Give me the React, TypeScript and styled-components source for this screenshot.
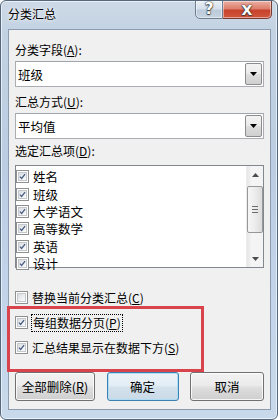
import React from "react";
import styled, { createGlobalStyle } from "styled-components";

const GlobalStyle = createGlobalStyle`
  html, body {
    margin: 0;
    padding: 0;
    background: #ffffff;
  }
  body {
    font-family: "Noto Sans CJK SC", "Noto Sans", "Liberation Sans", sans-serif;
    font-size: 12px;
    color: #000;
  }
`;

const Window = styled.div`
  position: relative;
  box-sizing: border-box;
  width: 278px;
  height: 420px;
  border: 1px solid #55687c;
  border-radius: 6px;
  background: linear-gradient(
    180deg,
    #cdd9e6 0%,
    #c2d2e3 8%,
    #bacde2 40%,
    #c2d5ea 75%,
    #c8d9eb 100%
  );
  box-shadow: inset 0 0 0 1px rgba(255, 255, 255, 0.6);
  display: flex;
  flex-direction: column;
  overflow: hidden;
`;

const TitleBar = styled.div`
  display: flex;
  align-items: flex-start;
  justify-content: space-between;
  height: 28px;
  padding-left: 7px;
  padding-right: 5px;
`;

const Title = styled.div`
  margin-top: 5px;
  font-size: 12px;
  line-height: 16px;
  color: #000;
  text-shadow: 0 0 5px rgba(255, 255, 255, 0.9), 0 0 2px rgba(255, 255, 255, 0.9);
`;

const CaptionButtons = styled.div`
  display: flex;
`;

const CaptionButton = styled.div<{ $close?: boolean }>`
  box-sizing: border-box;
  width: ${(p) => (p.$close ? "49px" : "28px")};
  height: 19px;
  margin-top: -1px;
  display: flex;
  align-items: center;
  justify-content: center;
  border: 1px solid ${(p) => (p.$close ? "#7a3b33" : "#6f7f90")};
  border-left-width: ${(p) => (p.$close ? "0" : "1px")};
  border-radius: ${(p) => (p.$close ? "0 0 5px 0" : "0 0 0 5px")};
  background: ${(p) =>
    p.$close
      ? "linear-gradient(180deg, #eab0a4 0%, #dd7f6c 45%, #c8432d 55%, #d0573f 100%)"
      : "linear-gradient(180deg, #e9eff5 0%, #d6e0ea 45%, #bccbda 55%, #c6d4e1 100%)"};
  box-shadow: inset 0 0 0 1px rgba(255, 255, 255, 0.45);
  color: #fff;
  font-family: "DejaVu Sans", "Liberation Sans", sans-serif;
  font-weight: bold;
  font-size: ${(p) => (p.$close ? "14px" : "15px")};
  line-height: 1;
  text-shadow: 0 0 1px #3a3a3a, 0 0 2px #3a3a3a, 0 1px 1px #3a3a3a;
`;

const Client = styled.div`
  box-sizing: border-box;
  margin: 0 6px 9px 7px;
  flex: 1;
  border: 1px solid #8c9cae;
  background: #f0f0f0;
  padding: 12px 6px 0 6px;
  display: flex;
  flex-direction: column;
`;

const Label = styled.div<{ $gap?: number }>`
  height: 16px;
  line-height: 16px;
  margin-top: ${(p) => p.$gap ?? 0}px;
  white-space: nowrap;
`;

const Key = styled.span`
  text-decoration: underline;
  text-underline-offset: 1px;
`;

const Combo = styled.div`
  box-sizing: border-box;
  height: 26px;
  margin-top: 3px;
  display: flex;
  align-items: stretch;
  border: 1px solid #abadb3;
  border-top-color: #a0a4ad;
  background: #fff;
`;

const ComboText = styled.div`
  flex: 1;
  padding-left: 2px;
  display: flex;
  align-items: center;
  font-size: 12.5px;
`;

const DropButton = styled.div`
  box-sizing: border-box;
  width: 17px;
  margin: 1px;
  display: flex;
  align-items: center;
  justify-content: center;
  border: 1px solid #8c8c8c;
  border-radius: 2px;
  background: linear-gradient(180deg, #f3f3f3 0%, #ebebeb 45%, #dcdcdc 55%, #cfcfcf 100%);
`;

const ListBox = styled.div`
  box-sizing: border-box;
  height: 103px;
  margin-top: 6px;
  display: flex;
  border: 1px solid #828790;
  background: #fff;
`;

const ListItems = styled.div`
  flex: 1;
  padding: 2px 0 0 0;
`;

const ListRow = styled.div`
  height: 17.4px;
  display: flex;
  align-items: center;
  gap: 4px;
  white-space: nowrap;
  font-size: 12.5px;
`;

const ScrollBar = styled.div`
  width: 16px;
  display: flex;
  flex-direction: column;
  background: linear-gradient(90deg, #e6e6e6 0%, #f5f5f5 30%, #f3f3f3 100%);
  border-left: 1px solid #ececec;
`;

const ScrollArrow = styled.div`
  height: 17px;
  display: flex;
  align-items: center;
  justify-content: center;
`;

const ScrollTrack = styled.div`
  flex: 1;
  padding-top: 3px;
`;

const Thumb = styled.div`
  box-sizing: border-box;
  height: 47px;
  border: 1px solid #979797;
  border-radius: 2px;
  background: linear-gradient(90deg, #f6f6f6 0%, #ececec 50%, #dcdcdc 100%);
  display: flex;
  align-items: center;
  justify-content: center;
`;

const CheckRow = styled.div<{ $gap: number }>`
  height: 17px;
  margin-top: ${(p) => p.$gap}px;
  display: flex;
  align-items: center;
  gap: 4px;
  white-space: nowrap;
`;

const Box = styled.div`
  box-sizing: border-box;
  width: 13px;
  height: 13px;
  flex: none;
  border: 1px solid #8e8f8f;
  padding: 1px;
  background: #fff;
`;

const BoxInner = styled.div`
  box-sizing: border-box;
  width: 100%;
  height: 100%;
  border: 1px solid #c4c7cb;
  background: linear-gradient(135deg, #d9dce0 0%, #eef0f2 60%, #fbfbfb 100%);
  display: flex;
  align-items: center;
  justify-content: center;
`;

const Focus = styled.span`
  outline: 1px dotted #000;
  outline-offset: 0;
  padding: 0 1px;
  line-height: 16px;
`;

const ButtonRow = styled.div`
  margin-top: 16px;
  display: flex;
  justify-content: space-between;
`;

const Button = styled.div<{ $w: number; $default?: boolean }>`
  box-sizing: border-box;
  width: ${(p) => p.$w}px;
  height: 29px;
  display: flex;
  align-items: center;
  justify-content: center;
  border: 1px solid ${(p) => (p.$default ? "#3c7fb1" : "#707070")};
  border-radius: 3px;
  background: ${(p) =>
    p.$default
      ? "linear-gradient(180deg, #edf4f9 0%, #e3edf5 45%, #d3e1ec 55%, #c9d9e6 100%)"
      : "linear-gradient(180deg, #f2f2f2 0%, #ebebeb 45%, #dddddd 55%, #cfcfcf 100%)"};
  box-shadow: inset 0 0 0 1px
    ${(p) => (p.$default ? "rgba(170, 220, 245, 0.9)" : "rgba(255, 255, 255, 0.8)")};
  font-size: 12.5px;
`;

const Highlight = styled.div`
  position: absolute;
  left: 6px;
  top: 305px;
  width: 197px;
  height: 66px;
  box-sizing: border-box;
  border: 3px solid #d8434c;
  pointer-events: none;
`;

function Check({ checked }: { checked: boolean }) {
  return (
    <Box>
      <BoxInner>
        {checked && (
          <svg width="9" height="9" viewBox="0 0 9 9">
            <path
              d="M1.2 4.6 L3.4 7 L7.8 1.4"
              fill="none"
              stroke="#4a5f86"
              strokeWidth="1.7"
            />
          </svg>
        )}
      </BoxInner>
    </Box>
  );
}

function DownTriangle({ color = "#000" }: { color?: string }) {
  return (
    <svg width="7" height="4" viewBox="0 0 7 4">
      <path d="M0 0 H7 L3.5 4 Z" fill={color} />
    </svg>
  );
}

const fields = ["姓名", "班级", "大学语文", "高等数学", "英语", "设计"];

export default function App() {
  return (
    <>
      <GlobalStyle />
      <Window>
        <TitleBar>
          <Title>分类汇总</Title>
          <CaptionButtons>
            <CaptionButton>?</CaptionButton>
            <CaptionButton $close>X</CaptionButton>
          </CaptionButtons>
        </TitleBar>
        <Client>
          <Label>
            分类字段(<Key>A</Key>):
          </Label>
          <Combo>
            <ComboText>班级</ComboText>
            <DropButton>
              <DownTriangle />
            </DropButton>
          </Combo>
          <Label $gap={7}>
            汇总方式(<Key>U</Key>):
          </Label>
          <Combo>
            <ComboText>平均值</ComboText>
            <DropButton>
              <DownTriangle />
            </DropButton>
          </Combo>
          <Label $gap={4}>
            选定汇总项(<Key>D</Key>):
          </Label>
          <ListBox>
            <ListItems>
              {fields.map((f) => (
                <ListRow key={f}>
                  <Check checked />
                  <span>{f}</span>
                </ListRow>
              ))}
            </ListItems>
            <ScrollBar>
              <ScrollArrow>
                <svg width="7" height="4" viewBox="0 0 7 4">
                  <path d="M0 4 H7 L3.5 0 Z" fill="#4d4d4d" />
                </svg>
              </ScrollArrow>
              <ScrollTrack>
                <Thumb>
                  <svg width="6" height="7" viewBox="0 0 6 7">
                    <path d="M0 0.5 H6 M0 3.5 H6 M0 6.5 H6" stroke="#6b6b6b" strokeWidth="1" />
                  </svg>
                </Thumb>
              </ScrollTrack>
              <ScrollArrow>
                <DownTriangle color="#4d4d4d" />
              </ScrollArrow>
            </ScrollBar>
          </ListBox>
          <CheckRow $gap={21}>
            <Check checked={false} />
            <span>
              替换当前分类汇总(<Key>C</Key>)
            </span>
          </CheckRow>
          <CheckRow $gap={8}>
            <Check checked />
            <Focus>
              每组数据分页(<Key>P</Key>)
            </Focus>
          </CheckRow>
          <CheckRow $gap={8}>
            <Check checked />
            <span>
              汇总结果显示在数据下方(<Key>S</Key>)
            </span>
          </CheckRow>
          <ButtonRow>
            <Button $w={80}>
              <span>
                全部删除(<Key>R</Key>)
              </span>
            </Button>
            <Button $w={72} $default>
              确定
            </Button>
            <Button $w={74}>取消</Button>
          </ButtonRow>
        </Client>
        <Highlight />
      </Window>
    </>
  );
}
